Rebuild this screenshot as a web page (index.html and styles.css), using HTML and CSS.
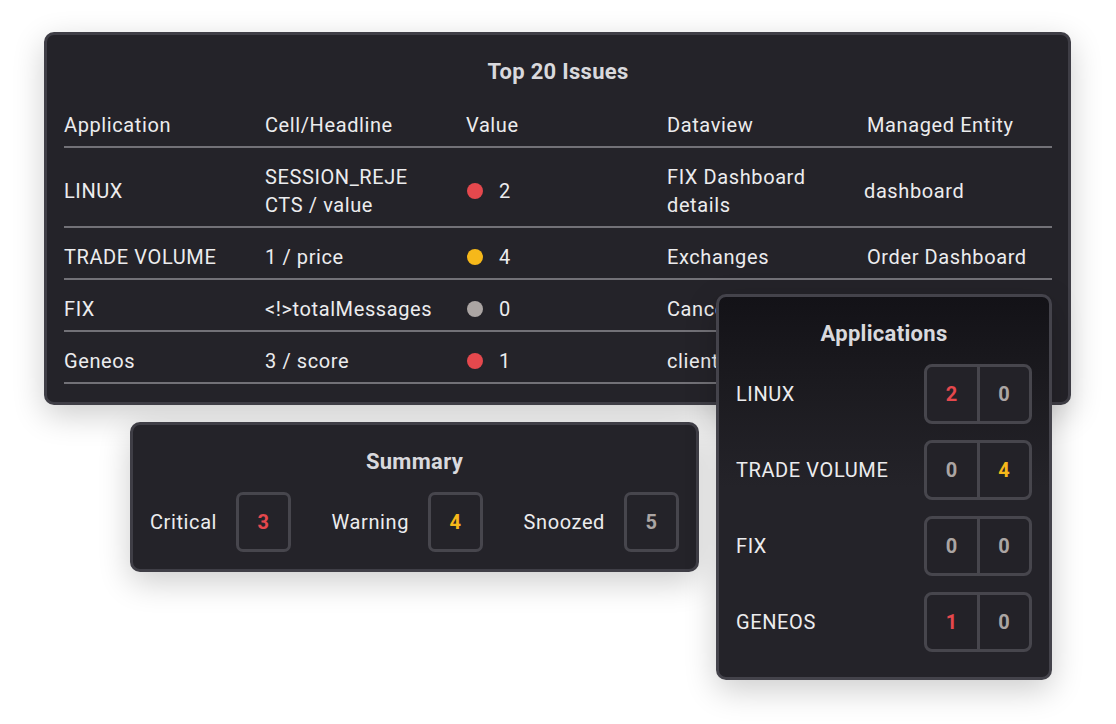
FILE: index.html
```html
<!DOCTYPE html>
<html lang="en">

<head>
	<meta charset="UTF-8">
	<meta name="viewport" content="width=device-width, initial-scale=1.0">
	<title>Issues Overview</title>
	<link rel="stylesheet" href="styles.css">
</head>

<body>
	<div class="canvas">
		<section class="card issues">
			<h2 class="card-title">Top 20 Issues</h2>
			<div class="table">
				<div class="row head">
					<div class="cell">Application</div>
					<div class="cell">Cell/Headline</div>
					<div class="cell">Value</div>
					<div class="cell">Dataview</div>
					<div class="cell">Managed Entity</div>
				</div>
				<div class="row">
					<div class="cell">LINUX</div>
					<div class="cell">SESSION_REJE<br>CTS / value</div>
					<div class="cell"><span class="dot critical"></span>2</div>
					<div class="cell">FIX Dashboard<br>details</div>
					<div class="cell entity">dashboard</div>
				</div>
				<div class="row">
					<div class="cell">TRADE VOLUME</div>
					<div class="cell">1 / price</div>
					<div class="cell"><span class="dot warning"></span>4</div>
					<div class="cell">Exchanges</div>
					<div class="cell">Order Dashboard</div>
				</div>
				<div class="row">
					<div class="cell">FIX</div>
					<div class="cell">&lt;!&gt;totalMessages</div>
					<div class="cell"><span class="dot ok"></span>0</div>
					<div class="cell">Cancels</div>
					<div class="cell">fix-gateway</div>
				</div>
				<div class="row">
					<div class="cell">Geneos</div>
					<div class="cell">3 / score</div>
					<div class="cell"><span class="dot critical"></span>1</div>
					<div class="cell">clients</div>
					<div class="cell">gateway</div>
				</div>
			</div>
		</section>

		<section class="card summary">
			<h2 class="card-title">Summary</h2>
			<div class="summary-items">
				<div class="summary-item">
					<span>Critical</span>
					<span class="count critical">3</span>
				</div>
				<div class="summary-item">
					<span>Warning</span>
					<span class="count warning">4</span>
				</div>
				<div class="summary-item">
					<span>Snoozed</span>
					<span class="count ok">5</span>
				</div>
			</div>
		</section>

		<section class="card applications">
			<h2 class="card-title">Applications</h2>
			<div class="app-list">
				<div class="app-row">
					<span>LINUX</span>
					<div class="pair"><span class="critical">2</span><span class="ok">0</span></div>
				</div>
				<div class="app-row">
					<span>TRADE VOLUME</span>
					<div class="pair"><span class="ok">0</span><span class="warning">4</span></div>
				</div>
				<div class="app-row">
					<span>FIX</span>
					<div class="pair"><span class="ok">0</span><span class="ok">0</span></div>
				</div>
				<div class="app-row">
					<span>GENEOS</span>
					<div class="pair"><span class="critical">1</span><span class="ok">0</span></div>
				</div>
			</div>
		</section>
	</div>
</body>

</html>
```

FILE: styles.css
```css
body {
	margin: 0;
	background: #ffffff;
	font-family: Roboto, "Liberation Sans", Arial, sans-serif;
	font-size: 20px;
	line-height: 28px;
	letter-spacing: 0.6px;
	color: #ececee;
}

.canvas {
	position: relative;
	width: 1116px;
	height: 724px;
}

.card {
	box-sizing: border-box;
	background: #242329;
	border: 3px solid #3f3e46;
	border-radius: 10px;
	box-shadow: 0 10px 32px rgba(0, 0, 0, 0.2);
}

.card-title {
	margin: 0;
	font-size: 22px;
	font-weight: 700;
	line-height: 28px;
	letter-spacing: 0.3px;
	text-align: center;
	color: #d9d9dd;
}

/* top issues table */
.issues {
	position: absolute;
	left: 44px;
	top: 32px;
	width: 1027px;
	height: 373px;
	padding: 23px 16px 0 17px;
}

.issues .card-title {
	margin-bottom: 25px;
}

.row {
	display: grid;
	grid-template-columns: 201px 201px 201px 200px 1fr;
	border-bottom: 2px solid #727177;
}

.cell {
	display: flex;
	align-items: center;
	padding: 15px 0 7px;
	white-space: nowrap;
}

.head .cell {
	padding-top: 0;
}

.cell.entity {
	margin-left: -3px;
}

.dot {
	display: inline-block;
	width: 16px;
	height: 16px;
	border-radius: 50%;
	margin: 0 16px 0 1px;
}

.dot.critical { background: #e5484d; }
.dot.warning { background: #f6b81a; }
.dot.ok { background: #aba5a3; }

.critical { color: #e5484d; }
.warning { color: #f6b81a; }
.ok { color: #aba5a3; }

/* summary */
.summary {
	position: absolute;
	left: 130px;
	top: 422px;
	width: 569px;
	height: 150px;
	padding: 23px 17px 0;
}

.summary-items {
	display: flex;
	justify-content: space-between;
	margin-top: 16px;
}

.summary-item {
	display: flex;
	align-items: center;
	gap: 19px;
}

.count {
	box-sizing: border-box;
	width: 55px;
	height: 60px;
	display: flex;
	align-items: center;
	justify-content: center;
	border: 3px solid #47464d;
	border-radius: 7px;
	font-weight: 700;
}

/* applications */
.applications {
	position: absolute;
	left: 716px;
	top: 294px;
	width: 336px;
	height: 386px;
	padding: 23px 17px 0;
	background: linear-gradient(#131217 0%, #1c1b20 25%, #242329 50%);
	border-color: #44434b;
}

.app-list {
	display: flex;
	flex-direction: column;
	gap: 16px;
	margin-top: 16px;
}

.app-row {
	display: flex;
	align-items: center;
	justify-content: space-between;
}

.pair {
	box-sizing: border-box;
	display: flex;
	width: 108px;
	height: 60px;
	border: 3px solid #47464d;
	border-radius: 8px;
	background: #232228;
	font-weight: 700;
}

.pair span {
	flex: 1;
	display: flex;
	align-items: center;
	justify-content: center;
}

.pair span + span {
	border-left: 3px solid #47464d;
}
```
